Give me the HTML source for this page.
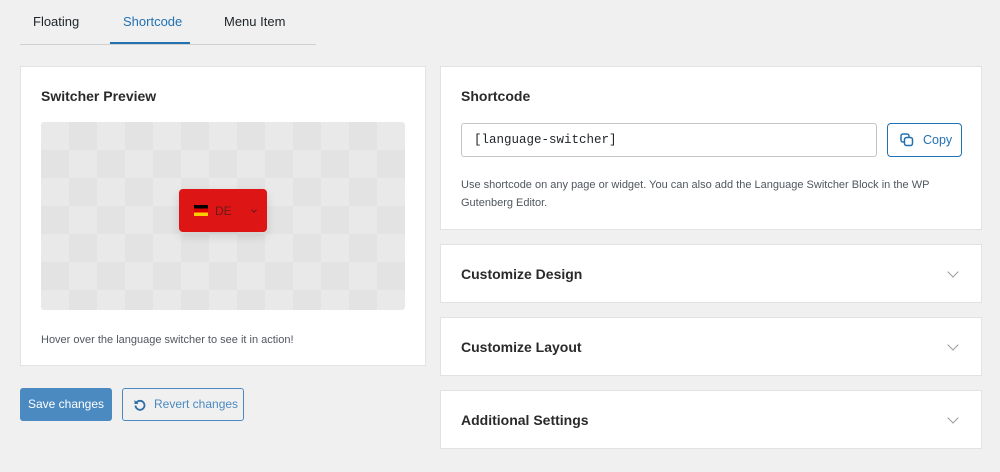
<!DOCTYPE html><html><head><style>
*{box-sizing:border-box;margin:0;padding:0}
body{width:1000px;height:472px;background:#f0f0f1;font-family:"Liberation Sans",sans-serif;color:#1d2327;position:relative;overflow:hidden}
.tabs{position:absolute;left:20px;top:0;width:296px;height:45px;border-bottom:1px solid #d0d0d0}
.tab{position:absolute;top:14px;font-size:13px}
.card{position:absolute;background:#fff;border:1px solid #e2e2e2}
h3{font-size:14px;font-weight:bold;position:absolute;left:20px;color:#2a2a2a}
.chev{position:absolute;right:24px;width:8px;height:8px;border-right:1.5px solid #999;border-bottom:1.5px solid #999;transform:rotate(45deg)}
.prev{position:absolute;left:20px;top:55px;width:364px;height:188px;border-radius:3px;
background-color:#e9e9e9;background-image:linear-gradient(45deg,#e3e3e3 25%,transparent 25%,transparent 75%,#e3e3e3 75%),linear-gradient(45deg,#e3e3e3 25%,transparent 25%,transparent 75%,#e3e3e3 75%);background-size:56px 56px;background-position:0 0,28px 28px;overflow:hidden}
</style></head><body>
<div class="tabs">
<div class="tab" style="left:13px">Floating</div>
<div class="tab" style="left:103px;color:#2271b1">Shortcode</div>
<div class="tab" style="left:204px">Menu Item</div>
<div style="position:absolute;left:90px;top:42px;width:80px;height:2px;background:#2271b1"></div>
</div>
<div class="card" style="left:20px;top:66px;width:406px;height:300px">
<h3 style="top:21px">Switcher Preview</h3>
<div class="prev">
<div style="position:absolute;left:138px;top:67px;width:88px;height:43px;background:#dd1515;border-radius:4px;box-shadow:0 4px 10px rgba(0,0,0,.12)">
<div style="position:absolute;left:15px;top:16px;width:14px;height:11px;background:linear-gradient(#000 0 33%,#dd0000 33% 66%,#ffce00 66%)"></div>
<div style="position:absolute;left:36px;top:15px;font-size:12px;color:#6b1a1a">DE</div>
<div style="position:absolute;left:73px;top:19px;width:4px;height:4px;border-right:1px solid #6b1a1a;border-bottom:1px solid #6b1a1a;transform:rotate(45deg)"></div>
</div></div>
<div style="position:absolute;left:20px;top:267px;font-size:11px;color:#50575e">Hover over the language switcher to see it in action!</div>
</div>
<div style="position:absolute;left:20px;top:388px;width:92px;height:33px;background:#4a8ac0;border-radius:3px;color:#fff;font-size:12px;text-align:center;line-height:33px">Save changes</div>
<div style="position:absolute;left:122px;top:388px;width:122px;height:33px;border:1px solid #4a8ac0;border-radius:3px;color:#4a8ac0;font-size:12px;line-height:31px;padding-left:31px">
<svg style="position:absolute;left:11px;top:10px" width="12" height="12" viewBox="0 0 12 12"><path d="M2.5 3.5A4.5 4.5 0 1 1 1.5 6.5" fill="none" stroke="#2f6ea8" stroke-width="1.8"/><path d="M0.5 1v4h4z" fill="#2f6ea8"/></svg>Revert changes</div>
<div class="card" style="left:440px;top:66px;width:542px;height:164px">
<h3 style="top:21px">Shortcode</h3>
<div style="position:absolute;left:20px;top:56px;width:416px;height:34px;border:1px solid #c3c4c7;border-radius:3px;font-family:'Liberation Mono',monospace;font-size:12.5px;line-height:32px;padding-left:12px">[language-switcher]</div>
<div style="position:absolute;left:446px;top:56px;width:75px;height:34px;border:1px solid #2271b1;border-radius:4px;color:#2271b1;font-size:12.5px;line-height:32px;padding-left:35px">
<svg style="position:absolute;left:12px;top:9px" width="14" height="14" viewBox="0 0 14 14" fill="none" stroke="#2271b1" stroke-width="1.5"><rect x="1" y="1" width="8" height="8" rx="2"/><rect x="4.5" y="4.5" width="8" height="8" rx="2" fill="#fff"/></svg>Copy</div>
<div style="position:absolute;left:20px;top:109px;width:490px;font-size:11px;line-height:18px;color:#50575e">Use shortcode on any page or widget. You can also add the Language Switcher Block in the WP Gutenberg Editor.</div>
</div>
<div class="card" style="left:440px;top:244px;width:542px;height:59px"><h3 style="top:21px">Customize Design</h3><div class="chev" style="top:23px"></div></div>
<div class="card" style="left:440px;top:317px;width:542px;height:59px"><h3 style="top:21px">Customize Layout</h3><div class="chev" style="top:23px"></div></div>
<div class="card" style="left:440px;top:390px;width:542px;height:59px"><h3 style="top:21px">Additional Settings</h3><div class="chev" style="top:23px"></div></div>
</body></html>
